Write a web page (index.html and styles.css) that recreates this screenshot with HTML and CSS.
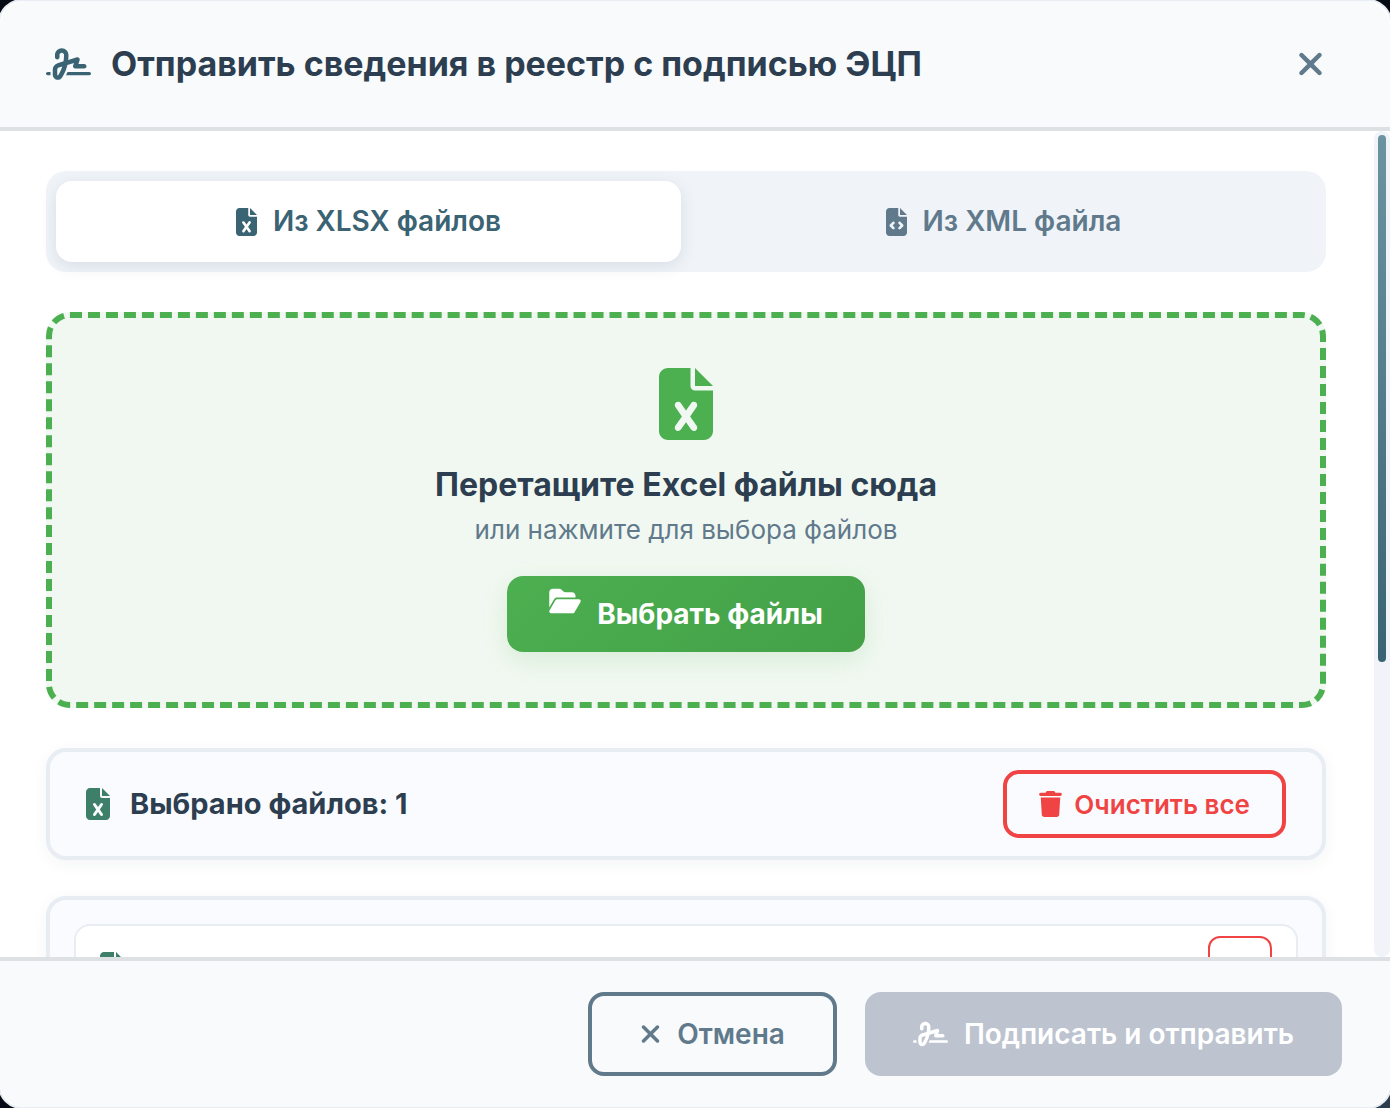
FILE: index.html
```html
<!DOCTYPE html>
<html lang="ru">
<head>
  <meta charset="UTF-8">
  <title>Отправить сведения в реестр с подписью ЭЦП</title>
  <link rel="stylesheet" href="styles.css">
</head>
<body>

  <svg class="sprite" aria-hidden="true">
    <symbol id="signature" viewBox="0 0 640 512"><path d="M192 128c0-17.7 14.3-32 32-32s32 14.3 32 32v7.8c0 27.7-2.4 55.3-7.1 82.5l-84.4 25.3c-40.6 12.2-68.4 49.6-68.4 92v71.9c0 40 32.5 72.5 72.5 72.5c26 0 50-13.9 62.9-36.5l13.9-24.3c26.8-47 46.5-97.7 58.4-150.5l94.4-28.3-12.5 37.5c-3.3 9.8-1.6 20.5 4.4 28.8s15.7 13.3 26 13.3H544c17.7 0 32-14.3 32-32s-14.3-32-32-32H460.4l18-53.9c3.8-11.3 .9-23.8-7.4-32.4s-20.7-11.8-32.2-8.4L316.4 198.1c2.4-20.7 3.6-41.4 3.6-62.3V128c0-53-43-96-96-96s-96 43-96 96v32c0 17.7 14.3 32 32 32s32-14.3 32-32V128zm-9.2 177l49-14.7c-10.4 33.8-24.5 66.4-42.1 97.2l-13.9 24.3c-1.5 2.6-4.3 4.3-7.4 4.3c-4.7 0-8.5-3.8-8.5-8.5V335.6c0-14.1 9.3-26.6 22.8-30.7zM24 368c-13.3 0-24 10.7-24 24s10.7 24 24 24H64.3c-.2-2.8-.3-5.6-.3-8.5V368H24zm592 48c13.3 0 24-10.7 24-24s-10.7-24-24-24H305.9c-6.7 16.3-14.2 32.3-22.3 48H616z"/></symbol>
    <symbol id="xmark" viewBox="0 0 384 512"><path d="M342.6 150.6c12.5-12.5 12.5-32.8 0-45.3s-32.8-12.5-45.3 0L192 210.7 86.6 105.4c-12.5-12.5-32.8-12.5-45.3 0s-12.5 32.8 0 45.3L146.7 256 41.4 361.4c-12.5 12.5-12.5 32.8 0 45.3s32.8 12.5 45.3 0L192 301.3 297.4 406.6c12.5 12.5 32.8 12.5 45.3 0s12.5-32.8 0-45.3L237.3 256 342.6 150.6z"/></symbol>
    <symbol id="file-excel" viewBox="0 0 384 512"><path d="M64 0C28.7 0 0 28.7 0 64V448c0 35.3 28.7 64 64 64H320c35.3 0 64-28.7 64-64V160H256c-17.7 0-32-14.3-32-32V0H64zM256 0V128H384L256 0zM155.7 250.2L192 302.1l36.3-51.9c7.6-10.9 22.6-13.5 33.4-5.9s13.5 22.6 5.9 33.4L221.3 344l46.4 66.2c7.6 10.9 5 25.8-5.9 33.4s-25.8 5-33.4-5.9L192 385.8l-36.3 51.9c-7.6 10.9-22.6 13.5-33.4 5.9s-13.5-22.6-5.9-33.4L162.7 344l-46.4-66.2c-7.6-10.9-5-25.8 5.9-33.4s25.8-5 33.4 5.9z"/></symbol>
    <symbol id="file-code" viewBox="0 0 384 512"><path d="M64 0C28.7 0 0 28.7 0 64V448c0 35.3 28.7 64 64 64H320c35.3 0 64-28.7 64-64V160H256c-17.7 0-32-14.3-32-32V0H64zM256 0V128H384L256 0zM153 289l-31 31 31 31c9.4 9.4 9.4 24.6 0 33.9s-24.6 9.4-33.9 0L71 337c-9.4-9.4-9.4-24.6 0-33.9l48-48c9.4-9.4 24.6-9.4 33.9 0s9.4 24.6 0 33.9zM265 255l48 48c9.4 9.4 9.4 24.6 0 33.9l-48 48c-9.4 9.4-24.6 9.4-33.9 0s-9.4-24.6 0-33.9l31-31-31-31c-9.4-9.4-9.4-24.6 0-33.9s24.6-9.4 33.9 0z"/></symbol>
    <symbol id="folder-open" viewBox="0 0 576 512"><path d="M88.7 223.8L0 375.8V96C0 60.7 28.7 32 64 32H181.5c17 0 33.3 6.7 45.3 18.7l26.5 26.5c12 12 28.3 18.7 45.3 18.7H416c35.3 0 64 28.7 64 64v32H144c-22.8 0-43.8 12.1-55.3 31.8zm27.6 16.1C122.1 230 132.6 224 144 224H544c11.5 0 22 6.1 27.7 16.1s5.7 22.2-.1 32.1l-112 192C453.9 474 443.4 480 432 480H32c-11.5 0-22-6.1-27.7-16.1s-5.7-22.2 .1-32.1l112-192z"/></symbol>
    <symbol id="trash" viewBox="0 0 448 512"><path d="M135.2 17.7L128 32H32C14.3 32 0 46.3 0 64S14.3 96 32 96H416c17.7 0 32-14.3 32-32s-14.3-32-32-32H320l-7.2-14.3C307.4 6.8 296.3 0 284.2 0H163.8c-12.1 0-23.2 6.8-28.6 17.7zM416 128H32L53.2 467c1.6 25.3 22.6 45 47.9 45H346.9c25.3 0 46.3-19.7 47.9-45L416 128z"/></symbol>
  </svg>

  <div class="modal" role="dialog" aria-labelledby="modalTitle">
    <header class="modal-header">
      <svg class="icon icon-title"><use href="#signature"/></svg>
      <h2 id="modalTitle">Отправить сведения в реестр с подписью ЭЦП</h2>
      <button type="button" class="close" aria-label="Закрыть">
        <svg class="icon icon-close"><use href="#xmark"/></svg>
      </button>
    </header>

    <div class="modal-main">
      <main class="modal-body">
        <div class="tabs" role="tablist">
          <button type="button" class="tab active" role="tab" aria-selected="true">
            <svg class="icon icon-tab"><use href="#file-excel"/></svg>
            Из XLSX файлов
          </button>
          <button type="button" class="tab" role="tab" aria-selected="false">
            <svg class="icon icon-tab"><use href="#file-code"/></svg>
            Из XML файла
          </button>
        </div>

        <section class="drop-zone">
          <svg class="icon icon-drop"><use href="#file-excel"/></svg>
          <h3>Перетащите Excel файлы сюда</h3>
          <p>или нажмите для выбора файлов</p>
          <button type="button" class="btn-choose">
            <svg class="icon icon-folder"><use href="#folder-open"/></svg>
            Выбрать файлы
          </button>
        </section>

        <section class="card files-header">
          <svg class="icon icon-file"><use href="#file-excel"/></svg>
          <h4>Выбрано файлов: 1</h4>
          <button type="button" class="btn-clear">
            <svg class="icon icon-trash"><use href="#trash"/></svg>
            Очистить все
          </button>
        </section>

        <section class="card files-list">
          <div class="file-item">
            <svg class="icon icon-file"><use href="#file-excel"/></svg>
            <button type="button" class="btn-remove" aria-label="Удалить">
              <svg class="icon icon-remove"><use href="#trash"/></svg>
            </button>
          </div>
        </section>
      </main>
      <div class="scroll-track" aria-hidden="true">
        <div class="scroll-thumb"></div>
      </div>
    </div>

    <footer class="modal-footer">
      <button type="button" class="btn btn-cancel">
        <svg class="icon icon-cancel"><use href="#xmark"/></svg>
        Отмена
      </button>
      <button type="button" class="btn btn-submit" disabled>
        <svg class="icon icon-submit"><use href="#signature"/></svg>
        Подписать и отправить
      </button>
    </footer>
  </div>

</body>
</html>
```
FILE: styles.css
```css
* {
  box-sizing: border-box;
}
body {
  margin: 0;
  overflow: hidden;
  background: linear-gradient(135deg, #050a14 90%, #2c3e50);
  font-family: Inter, "Liberation Sans", sans-serif;
  color: #2c3e50;
}
h2, h3, h4, p {
  margin: 0;
}
button {
  font-family: inherit;
  font-size: 28px;
  font-weight: 600;
  line-height: 33px;
  cursor: pointer;
}
.sprite {
  display: none;
}
.icon {
  fill: currentColor;
  flex: none;
  display: block;
}

.modal {
  display: flex;
  flex-direction: column;
  height: calc(100vh + 2px);
  margin: -1px -2px;
  border: 2px solid #e8edf4;
  border-radius: 24px;
  background: #fff;
  overflow: hidden;
}
.modal-header {
  display: flex;
  align-items: center;
  gap: 20px;
  padding: 31px 48px 31px 46px;
  border-bottom: 4px solid #dde1e4;
  border-radius: 26px 26px 0 0;
  background: #f8fafc;
}
.modal-header h2 {
  flex: 1;
  font-size: 34px;
  font-weight: 700;
  line-height: 42px;
}
.icon-title {
  width: 45px;
  height: 36px;
  color: #3a6373;
}
.close {
  display: flex;
  align-items: center;
  justify-content: center;
  width: 64px;
  height: 64px;
  padding: 0;
  border: none;
  background: none;
  color: #607a8c;
}
.icon-close {
  width: 27px;
  height: 36px;
}

.modal-main {
  display: flex;
  flex: 1;
  min-height: 0;
}
.modal-body {
  flex: 1;
  overflow-y: auto;
  scrollbar-width: none;
  padding: 40px 48px 40px 46px;
}
.scroll-track {
  width: 16px;
  padding: 4px;
  border-radius: 8px;
  background: #f0f4f9;
}
.scroll-thumb {
  height: 64.4%;
  border-radius: 4px;
  background: linear-gradient(180deg, #6c93a0, #3a6373);
}

.tabs {
  display: flex;
  gap: 10px;
  padding: 10px;
  margin-bottom: 40px;
  border-radius: 20px;
  background: #f0f4f9;
}
.tab {
  flex: 1;
  display: flex;
  align-items: center;
  justify-content: center;
  gap: 16px;
  padding: 24px;
  border: none;
  border-radius: 16px;
  background: none;
  color: #607a8c;
}
.tab.active {
  background: #fff;
  color: #3a6373;
  box-shadow: 0 4px 16px rgba(44, 62, 80, 0.12);
}
.icon-tab {
  width: 21px;
  height: 28px;
}

.drop-zone {
  display: flex;
  flex-direction: column;
  align-items: center;
  padding: 50px;
  margin-bottom: 40px;
  border: 6px dashed #4caf50;
  border-radius: 24px;
  background: #f1f8f1;
}
.icon-drop {
  width: 54px;
  height: 72px;
  margin-bottom: 25px;
  color: #4caf50;
}
.drop-zone h3 {
  margin-bottom: 8px;
  font-size: 32px;
  font-weight: 700;
  line-height: 40px;
}
.drop-zone p {
  margin-bottom: 29px;
  color: #607a8c;
  font-size: 26px;
  line-height: 34px;
}
.btn-choose {
  display: flex;
  align-items: center;
  gap: 16px;
  height: 76px;
  padding: 0 42px;
  border: none;
  border-radius: 16px;
  background: linear-gradient(135deg, #4caf50, #43a047);
  color: #fff;
  font-weight: 700;
  box-shadow: 0 8px 24px rgba(76, 175, 80, 0.15);
}
.icon-folder {
  width: 32px;
  height: 28px;
  margin-bottom: 26px;
}

.card {
  margin-bottom: 36px;
  border: 4px solid #e8edf4;
  border-radius: 20px;
  background: #fafbfe;
  box-shadow: 0 4px 16px rgba(44, 62, 80, 0.05);
}
.files-header {
  display: flex;
  align-items: center;
  gap: 20px;
  padding: 18px 36px;
}
.files-header h4 {
  flex: 1;
  font-size: 29px;
  font-weight: 700;
  line-height: 34px;
}
.icon-file {
  width: 24px;
  height: 32px;
  color: #3d7f68;
}
.btn-clear {
  display: flex;
  align-items: center;
  gap: 12px;
  height: 68px;
  padding: 0 32px;
  border: 4px solid #f04444;
  border-radius: 16px;
  background: none;
  color: #f04444;
  font-size: 26px;
}
.icon-trash {
  width: 23px;
  height: 26px;
}

.files-list {
  min-height: 470px;
  margin-bottom: 0;
  padding: 24px;
}
.file-item {
  display: flex;
  align-items: center;
  justify-content: space-between;
  padding: 10px 24px;
  border: 2px solid #e8edf4;
  border-radius: 16px;
  background: #fff;
}
.btn-remove {
  display: flex;
  align-items: center;
  justify-content: center;
  width: 64px;
  height: 64px;
  padding: 0;
  border: 2px solid #f04444;
  border-radius: 12px;
  background: none;
  color: #f04444;
}
.icon-remove {
  width: 18px;
  height: 20px;
}

.modal-footer {
  display: flex;
  justify-content: flex-end;
  gap: 28px;
  padding: 31px 48px;
  border-top: 4px solid #dde1e4;
  border-radius: 0 0 26px 26px;
  background: #f8fafc;
}
.btn {
  display: flex;
  align-items: center;
  gap: 16px;
  height: 84px;
  padding: 0 48px;
  border: none;
  border-radius: 16px;
}
.btn-cancel {
  border: 4px solid #607a8c;
  background: none;
  color: #607a8c;
}
.btn-submit {
  background: #bdc4d0;
  color: #fff;
  cursor: default;
}
.icon-cancel {
  width: 21px;
  height: 28px;
}
.icon-submit {
  width: 35px;
  height: 28px;
}
```
